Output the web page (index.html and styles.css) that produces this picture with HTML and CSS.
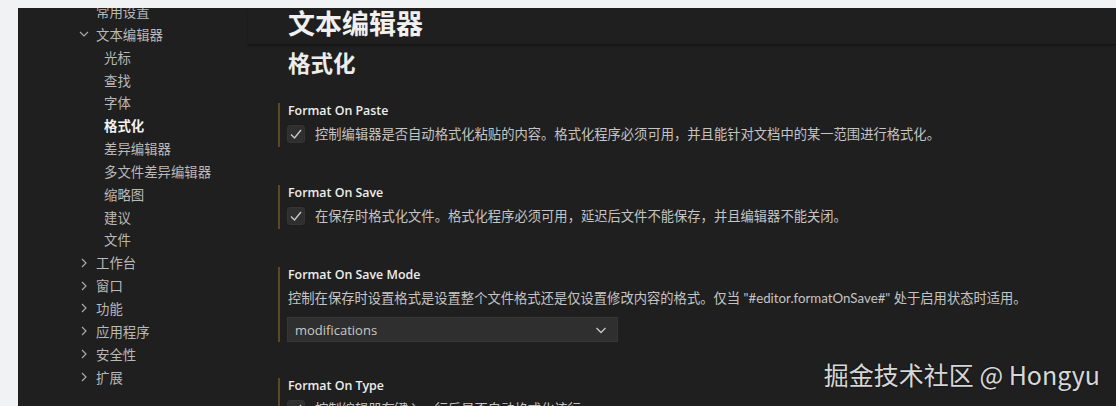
FILE: index.html
```html
<!DOCTYPE html>
<html lang="zh-CN">
<head>
<meta charset="utf-8">
<title>设置 - 格式化</title>
<link rel="stylesheet" href="styles.css">
</head>
<body>
<div class="window">
  <nav class="tree">
    <div class="row l1">常用设置</div>
    <div class="row l0"><span class="chev"><svg viewBox="0 0 12 12" width="12" height="12"><path d="M2 4 L6 8 L10 4" fill="none" stroke="#a8a8a8" stroke-width="1.2"/></svg></span>文本编辑器</div>
    <div class="row l2">光标</div>
    <div class="row l2">查找</div>
    <div class="row l2">字体</div>
    <div class="row l2 active">格式化</div>
    <div class="row l2">差异编辑器</div>
    <div class="row l2">多文件差异编辑器</div>
    <div class="row l2">缩略图</div>
    <div class="row l2">建议</div>
    <div class="row l2">文件</div>
    <div class="row l0"><span class="chev"><svg viewBox="0 0 12 12" width="12" height="12"><path d="M4 2 L8 6 L4 10" fill="none" stroke="#a8a8a8" stroke-width="1.2"/></svg></span>工作台</div>
    <div class="row l0"><span class="chev"><svg viewBox="0 0 12 12" width="12" height="12"><path d="M4 2 L8 6 L4 10" fill="none" stroke="#a8a8a8" stroke-width="1.2"/></svg></span>窗口</div>
    <div class="row l0"><span class="chev"><svg viewBox="0 0 12 12" width="12" height="12"><path d="M4 2 L8 6 L4 10" fill="none" stroke="#a8a8a8" stroke-width="1.2"/></svg></span>功能</div>
    <div class="row l0"><span class="chev"><svg viewBox="0 0 12 12" width="12" height="12"><path d="M4 2 L8 6 L4 10" fill="none" stroke="#a8a8a8" stroke-width="1.2"/></svg></span>应用程序</div>
    <div class="row l0"><span class="chev"><svg viewBox="0 0 12 12" width="12" height="12"><path d="M4 2 L8 6 L4 10" fill="none" stroke="#a8a8a8" stroke-width="1.2"/></svg></span>安全性</div>
    <div class="row l0"><span class="chev"><svg viewBox="0 0 12 12" width="12" height="12"><path d="M4 2 L8 6 L4 10" fill="none" stroke="#a8a8a8" stroke-width="1.2"/></svg></span>扩展</div>
  </nav>
  <main class="content">
    <header class="head"><h1>文本编辑器</h1></header>
    <h2>格式化</h2>
    <section class="item first">
      <div class="title">Format On Paste</div>
      <div class="checkrow">
        <span class="box"><svg viewBox="0 0 18 18" width="18" height="18"><path d="M4 9.5 L7.5 13 L14 5" fill="none" stroke="#c8c8c8" stroke-width="1.4"/></svg></span>
        <span class="desc">控制编辑器是否自动格式化粘贴的内容。格式化程序必须可用，并且能针对文档中的某一范围进行格式化。</span>
      </div>
    </section>
    <section class="item second">
      <div class="title">Format On Save</div>
      <div class="checkrow">
        <span class="box"><svg viewBox="0 0 18 18" width="18" height="18"><path d="M4 9.5 L7.5 13 L14 5" fill="none" stroke="#c8c8c8" stroke-width="1.4"/></svg></span>
        <span class="desc">在保存时格式化文件。格式化程序必须可用，延迟后文件不能保存，并且编辑器不能关闭。</span>
      </div>
    </section>
    <section class="item third">
      <div class="title">Format On Save Mode</div>
      <div class="desc block">控制在保存时设置格式是设置整个文件格式还是仅设置修改内容的格式。仅当 "#editor.formatOnSave#" 处于启用状态时适用。</div>
      <div class="select"><span>modifications</span><svg viewBox="0 0 16 16" width="16" height="16"><path d="M3.5 6 L8 10.5 L12.5 6" fill="none" stroke="#c8c8c8" stroke-width="1.3"/></svg></div>
    </section>
    <section class="item fourth">
      <div class="title">Format On Type</div>
      <div class="checkrow">
        <span class="box"><svg viewBox="0 0 18 18" width="18" height="18"><path d="M4 9.5 L7.5 13 L14 5" fill="none" stroke="#c8c8c8" stroke-width="1.4"/></svg></span>
        <span class="desc">控制编辑器在键入一行后是否自动格式化该行。</span>
      </div>
    </section>
  </main>
  <div class="watermark">掘金技术社区 @ Hongyu</div>
</div>
</body>
</html>
```
FILE: styles.css
```css
html, body {
  margin: 0;
  padding: 0;
  background: #f1f2f4;
  height: 100%;
  overflow: hidden;
}
body {
  padding: 8px 0 0 18px;
  box-sizing: border-box;
  font-family: "Noto Sans CJK SC", "Noto Sans", sans-serif;
}
.window {
  position: relative;
  display: flex;
  background: #1f1f1f;
  height: 398px;
  overflow: hidden;
}
.tree {
  width: 230px;
  flex: none;
  margin-top: -8px;
  font-size: 13.4px;
  color: #b9b9b9;
}
.row {
  height: 22.85px;
  line-height: 22.85px;
  display: flex;
  align-items: center;
  white-space: nowrap;
}
.l0 { padding-left: 60px; }
.l1 { padding-left: 78px; }
.l2 { padding-left: 86px; }
.chev {
  width: 18px;
  display: inline-flex;
  align-items: center;
}
.active {
  color: #f2f2f2;
  font-weight: 700;
}
.content {
  flex: 1;
  min-width: 0;
}
.head {
  height: 36px;
  border-bottom: 1px solid #151515;
  box-shadow: 0 1px 2px rgba(0,0,0,0.25);
  padding-left: 40px;
}
h1 {
  margin: 0;
  font-size: 27px;
  line-height: 28px;
  padding-top: 1px;
  font-weight: 700;
  color: #f0f0f0;
}
h2 {
  margin: 4px 0 0 40px;
  font-size: 22.5px;
  line-height: 26px;
  font-weight: 700;
  color: #ececec;
}
.item {
  margin-left: 30px;
  border-left: 2px solid #5a4a22;
  padding-left: 8px;
  padding-bottom: 4px;
}
.first { margin-top: 28px; }
.second { margin-top: 38px; }
.third { margin-top: 38px; padding-bottom: 0; }
.fourth { margin-top: 36px; }
.title {
  font-family: "Open Sans", "Noto Sans", sans-serif;
  font-weight: 600;
  font-size: 12.4px;
  line-height: 16px;
  color: #ededed;
}
.checkrow {
  display: flex;
  align-items: center;
  margin-top: 6px;
  height: 18px;
}
.box {
  width: 18px;
  height: 18px;
  border-radius: 3px;
  background: #2f2f2f;
  border: 1px solid #343434;
  box-sizing: border-box;
  display: inline-flex;
  align-items: center;
  justify-content: center;
  margin-left: -1px;
  margin-right: 10px;
}
.box svg { flex: none; }
.desc {
  font-family: "Lato", "Noto Sans CJK SC", sans-serif;
  font-size: 13.3px;
  color: #c4c4c4;
  white-space: nowrap;
  line-height: 16px;
}
.desc.block {
  margin-top: 7px;
}
.select {
  margin-top: 11px;
  margin-left: -1px;
  width: 331px;
  height: 25px;
  box-sizing: border-box;
  background: #2f2f2f;
  border: 1px solid #363636;
  display: flex;
  align-items: center;
  justify-content: space-between;
  padding: 0 8px 0 7px;
  font-family: "Open Sans", "Noto Sans", sans-serif;
  font-size: 13px;
  color: #c8c8c8;
}
.watermark {
  position: absolute;
  right: 16px;
  top: 349px;
  font-size: 25px;
  line-height: 34px;
  color: rgba(236,236,236,0.92);
  text-shadow: 0 0 2px rgba(0,0,0,0.6);
  white-space: nowrap;
}
```
